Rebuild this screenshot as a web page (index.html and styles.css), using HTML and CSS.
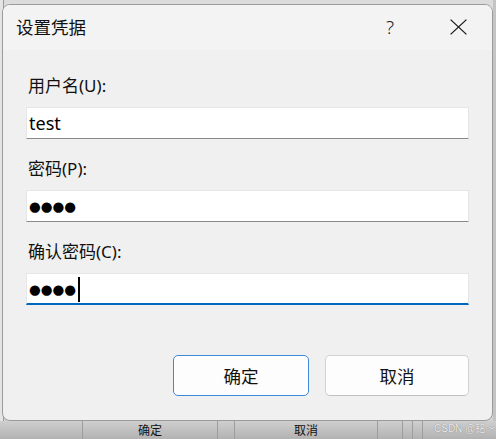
FILE: index.html
```html
<!DOCTYPE html>
<html lang="zh-CN">
<head>
<meta charset="utf-8">
<title>设置凭据</title>
<link rel="stylesheet" href="styles.css">
</head>
<body>
<div class="desk">
  <div class="desk-top">
    <div class="edge-left"></div>
    <div class="edge-right"></div>
  </div>
  <div class="desk-bar">
    <div class="cell c1"></div>
    <div class="cell c2">确定</div>
    <div class="cell c3"></div>
    <div class="cell c4">取消</div>
    <div class="cell c5"></div>
    <div class="cell c6"></div>
    <div class="cell c7"></div>
    <div class="cell c8"><span class="mark">CSDN @铭 ~</span></div>
  </div>

  <div class="dialog">
    <div class="titlebar">
      <span class="title">设置凭据</span>
      <span class="help">?</span>
      <span class="close">
        <svg width="17" height="16" viewBox="0 0 17 16"><path d="M0.6 0.6 L16.4 15.4 M16.4 0.6 L0.6 15.4" stroke="#1a1a1a" stroke-width="1.3" fill="none"/></svg>
      </span>
    </div>
    <div class="body">
      <div class="field">
        <div class="label">用户名(U):</div>
        <div class="box"><span class="val">test</span></div>
      </div>
      <div class="field">
        <div class="label">密码(P):</div>
        <div class="box"><span class="dots">●●●●</span></div>
      </div>
      <div class="field">
        <div class="label">确认密码(C):</div>
        <div class="box focus"><span class="dots">●●●●</span><span class="caret"></span></div>
      </div>
      <div class="buttons">
        <div class="btn primary">确定</div>
        <div class="btn cancel">取消</div>
      </div>
    </div>
  </div>
</div>
</body>
</html>
```

FILE: styles.css
```css
html, body {
  margin: 0;
  padding: 0;
}
body {
  width: 496px;
  height: 439px;
  overflow: hidden;
  font-family: "Noto Sans", "Noto Sans CJK SC", sans-serif;
}
.desk {
  position: relative;
  width: 496px;
  height: 439px;
  display: flex;
  flex-direction: column;
  background: #d6d6d6;
}
.desk-top {
  flex: 1;
  display: flex;
  justify-content: space-between;
  background: linear-gradient(#dcdcdc, #d2d2d2);
}
.edge-left {
  width: 3px;
  border-right: 1px solid #9a9a9a;
  background: #e4e4e4;
}
.edge-right {
  width: 3px;
  background: #c4c4c4;
}
.desk-bar {
  height: 18px;
  display: flex;
  background: linear-gradient(#cfcfcf, #b2b2b2);
  font-family: "Noto Sans CJK SC", sans-serif;
  font-size: 12px;
  color: #111;
  line-height: 18px;
}
.cell {
  height: 18px;
  border-right: 1px solid #9d9d9d;
  text-align: center;
  box-sizing: border-box;
}
.c1 { width: 83px; }
.c2 { width: 135px; }
.c3 { width: 17px; }
.c4 { width: 143px; }
.c5 { width: 25px; }
.c6 { width: 10px; }
.c7 { width: 10px; }
.c8 {
  flex: 1;
  border-right: 0;
  text-align: left;
  padding-left: 11px;
  padding-top: 2px;
}
.mark {
  display: block;
  font-family: "Liberation Sans", "Noto Sans CJK SC", sans-serif;
  font-size: 10px;
  line-height: 12px;
  color: #ececec;
  text-shadow: 0 0 1px #6a6a6a;
  white-space: nowrap;
}

.dialog {
  position: absolute;
  left: 2px;
  top: 4px;
  width: 491px;
  height: 417px;
  box-sizing: border-box;
  border: 1px solid #9b9b9b;
  border-radius: 8px;
  background: #f0f0f0;
  overflow: hidden;
  display: flex;
  flex-direction: column;
}
.titlebar {
  height: 45px;
  flex: none;
  background: #f3f3f3;
  display: flex;
  align-items: center;
  padding-left: 13px;
  padding-right: 25px;
}
.title {
  font-family: "Noto Sans CJK SC", sans-serif;
  font-size: 17.5px;
  color: #111;
  flex: 1;
  line-height: 24px;
  margin-top: -2px;
}
.help {
  font-family: "Noto Sans", sans-serif;
  font-size: 19px;
  font-weight: 300;
  color: #222;
  margin-right: 56px;
  margin-top: -1px;
}
.close {
  display: flex;
  margin-top: -1px;
}
.body {
  flex: 1;
  display: flex;
  flex-direction: column;
  padding: 24px 23px 24px 23px;
}
.field {
  display: flex;
  flex-direction: column;
  margin-bottom: 18px;
}
.label {
  font-family: "Noto Sans", "Noto Sans CJK SC", sans-serif;
  font-size: 17px;
  line-height: 24px;
  color: #111;
  padding-left: 2px;
  margin-bottom: 9px;
}
.box {
  height: 32px;
  box-sizing: border-box;
  background: #fff;
  border: 1px solid #e6e6e6;
  border-bottom: 1px solid #8a8a8a;
  display: flex;
  align-items: center;
  padding-left: 2px;
}
.box.focus {
  border-bottom: 2px solid #0067c0;
  padding-top: 1px;
}
.val {
  font-family: "Noto Sans", sans-serif;
  font-size: 18px;
  color: #000;
  line-height: 24px;
}
.dots {
  font-family: "DejaVu Sans", sans-serif;
  font-size: 13.5px;
  color: #000;
  line-height: 24px;
}
.caret {
  width: 1.5px;
  height: 25px;
  background: #000;
  margin-left: 2px;
}
.buttons {
  margin-top: auto;
  display: flex;
  justify-content: flex-end;
  gap: 16px;
}
.btn {
  height: 41px;
  box-sizing: border-box;
  border-radius: 5px;
  background: #fdfdfd;
  display: flex;
  align-items: center;
  justify-content: center;
  font-family: "Noto Sans CJK SC", sans-serif;
  font-size: 17.5px;
  color: #111;
}
.btn.primary {
  width: 136px;
  border: 1.5px solid #3c8ad8;
}
.btn.cancel {
  width: 144px;
  border: 1px solid #d2d2d2;
  border-bottom-color: #c0c0c0;
}
```
